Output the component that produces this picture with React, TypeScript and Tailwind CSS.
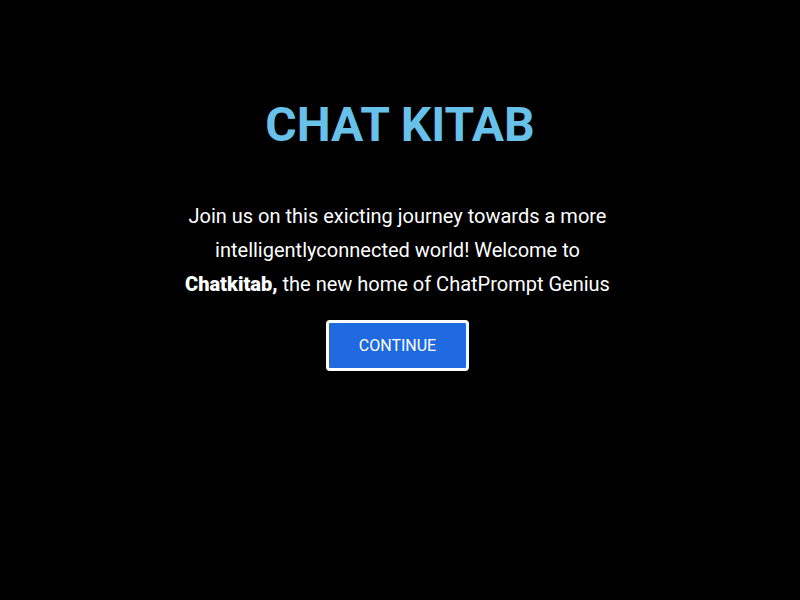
export default function App() {
  return (
    <div className="min-h-screen bg-black flex flex-col items-center pt-[96px] font-['Roboto',sans-serif]">
      {/* Title */}
      <h1 className="text-[48px] leading-[58px] font-bold text-[#68c1e8]">CHAT KITAB</h1>

      {/* Intro */}
      <p className="mt-[45px] mr-[5px] w-[480px] text-center text-[20px] leading-[34px] text-white">
        Join us on this exicting journey towards a more
        <br />
        intelligentlyconnected world! Welcome to
        <br />
        <span className="font-black">Chatkitab,</span> the new home of ChatPrompt Genius
      </p>

      <button className="mt-[19px] mr-[5px] w-[143px] h-[51px] rounded-[4px] border-[3px] border-white bg-[#1f6ae0] text-white text-[16px] font-normal">
        CONTINUE
      </button>
    </div>
  );
}
